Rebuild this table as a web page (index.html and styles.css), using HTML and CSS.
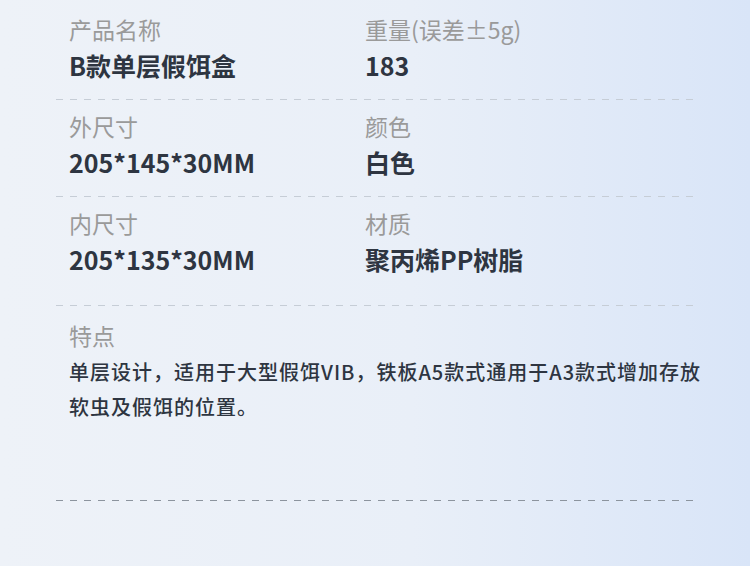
FILE: index.html
```html
<!DOCTYPE html>
<html lang="zh-CN">
<head>
    <meta charset="UTF-8">
    <meta name="viewport" content="width=device-width, initial-scale=1.0">
    <title>产品参数</title>
    <link rel="stylesheet" href="styles.css">
</head>
<body>
    <div class="specs">
        <div class="row row-first">
            <div class="cell">
                <div class="label">产品名称</div>
                <div class="value">B款单层假饵盒</div>
            </div>
            <div class="cell">
                <div class="label">重量(误差±5g)</div>
                <div class="value">183</div>
            </div>
        </div>
        <div class="divider"></div>

        <div class="row">
            <div class="cell">
                <div class="label">外尺寸</div>
                <div class="value">205*145*30MM</div>
            </div>
            <div class="cell">
                <div class="label">颜色</div>
                <div class="value">白色</div>
            </div>
        </div>
        <div class="divider"></div>

        <div class="row row-tall">
            <div class="cell">
                <div class="label">内尺寸</div>
                <div class="value">205*135*30MM</div>
            </div>
            <div class="cell">
                <div class="label">材质</div>
                <div class="value">聚丙烯PP树脂</div>
            </div>
        </div>
        <div class="divider"></div>

        <div class="feature">
            <div class="label">特点</div>
            <p class="desc">单层设计，适用于大型假饵VIB，铁板A5款式通用于A3款式增加存放软虫及假饵的位置。</p>
        </div>
        <div class="divider divider-dark"></div>
    </div>
</body>
</html>
```

FILE: styles.css
```css
html, body {
    height: 100%;
}
body {
    margin: 0;
    background: linear-gradient(90deg, #eef2f8 0%, #e9eff8 55%, #d9e5f8 100%);
    font-family: "Noto Sans CJK SC", "Noto Sans", sans-serif;
    color: #2e3541;
}
.specs {
    width: 641px;
    padding-left: 56px;
}
.row {
    display: grid;
    grid-template-columns: 296px 1fr;
    padding: 14px 0 17px 13px;
}
.row + .divider + .row {
    padding-top: 11px;
}
.row-tall {
    padding-bottom: 29px;
}
.row.row-tall {
    padding-top: 14px;
}
.label {
    font-size: 23px;
    line-height: 31px;
    color: #9a9a9a;
}
.value {
    margin-top: 4px;
    font-size: 25px;
    line-height: 33px;
    font-weight: bold;
    color: #2e3541;
}
.divider {
    height: 1px;
    background: repeating-linear-gradient(90deg, #c6cdd6 0 7px, transparent 7px 14px);
}
.divider-dark {
    background: repeating-linear-gradient(90deg, #8c949e 0 7px, transparent 7px 14px);
}
.feature {
    padding: 14px 0 76px 13px;
}
.desc {
    margin: 3px -12px 0 0;
    font-size: 20px;
    line-height: 35px;
    font-weight: 500;
    letter-spacing: 1px;
    color: #2e3541;
}
```
